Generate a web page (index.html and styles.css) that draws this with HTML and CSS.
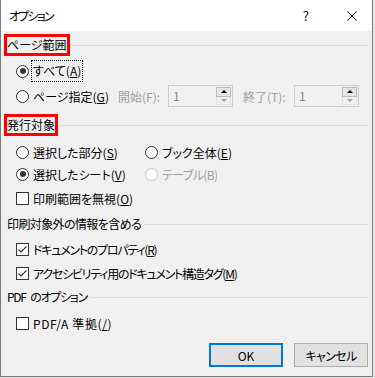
FILE: index.html
```html
<!DOCTYPE html>
<html lang="ja">
<head>
    <meta charset="UTF-8">
    <meta name="viewport" content="width=device-width, initial-scale=1.0">
    <title>オプション</title>
    <link rel="stylesheet" href="styles.css">
</head>
<body>
    <div class="dialog">
        <div class="titlebar">
            <span class="title">オプション</span>
            <span class="help">?</span>
            <svg class="close" width="10" height="10" viewBox="0 0 10 10">
                <path d="M0.5 0.5 L9.5 9.5 M9.5 0.5 L0.5 9.5" stroke="#000" stroke-width="1" fill="none"/>
            </svg>
        </div>

        <div class="content">
            <div class="group-label g1"><span class="marked">ページ範囲</span></div>
            <div class="row r1">
                <span class="radio checked"></span>
                <span class="text focus">すべて(<u>A</u>)</span>
            </div>
            <div class="row r2">
                <span class="radio"></span>
                <span class="text w-pages">ページ指定(<u>G</u>)</span>
                <span class="text dim w-from">開始(F):</span>
                <span class="spin">
                    <span class="spin-value">1</span>
                    <span class="spin-btns"><span class="up"></span><span class="down"></span></span>
                </span>
                <span class="text dim w-to">終了(T):</span>
                <span class="spin">
                    <span class="spin-value">1</span>
                    <span class="spin-btns"><span class="up"></span><span class="down"></span></span>
                </span>
            </div>

            <div class="group-label g2"><span class="marked">発行対象</span></div>
            <div class="row r3">
                <span class="cell">
                    <span class="radio"></span>
                    <span class="text">選択した部分(<u>S</u>)</span>
                </span>
                <span class="radio"></span>
                <span class="text">ブック全体(<u>E</u>)</span>
            </div>
            <div class="row r4">
                <span class="cell">
                    <span class="radio checked"></span>
                    <span class="text">選択したシート(<u>V</u>)</span>
                </span>
                <span class="radio disabled"></span>
                <span class="text dim tight-1">テーブル(B)</span>
            </div>
            <div class="row r5">
                <span class="check"></span>
                <span class="text">印刷範囲を無視(<u>O</u>)</span>
            </div>

            <div class="group-label g3"><span class="tight-1">印刷対象外の情報を含める</span></div>
            <div class="row r6">
                <span class="check checked">
                    <svg width="11" height="11" viewBox="0 0 11 11"><path d="M1.5 5.5 L4 8 L9.5 2.5" stroke="#333" stroke-width="1.1" fill="none"/></svg>
                </span>
                <span class="text tight-2">ドキュメントのプロパティ(<u>R</u>)</span>
            </div>
            <div class="row r7">
                <span class="check checked">
                    <svg width="11" height="11" viewBox="0 0 11 11"><path d="M1.5 5.5 L4 8 L9.5 2.5" stroke="#333" stroke-width="1.1" fill="none"/></svg>
                </span>
                <span class="text tight-2">アクセシビリティ用のドキュメント構造タグ(<u>M</u>)</span>
            </div>

            <div class="group-label g4"><span class="tight-2 spaced">PDF のオプション</span></div>
            <div class="row r8">
                <span class="check"></span>
                <span class="text wide">PDF/A 準拠(<u>/</u>)</span>
            </div>

            <div class="buttons">
                <button class="btn default">OK</button>
                <button class="btn tight-1">キャンセル</button>
            </div>
        </div>
    </div>
</body>
</html>
```

FILE: styles.css
```css
body {
    margin: 0;
    background: #e9e9e9;
    font-family: "Noto Sans CJK JP", "Noto Sans", sans-serif;
    font-size: 12px;
    color: #000;
    font-feature-settings: "palt";
}

.tight-1 { letter-spacing: -0.6px; }
.tight-2 { letter-spacing: -1.25px; }
.wide { letter-spacing: 0.6px; }
.spaced { word-spacing: 3px; }

.dialog {
    width: 371px;
    height: 376px;
    background: #f0f0f0;
    border: 1px solid #7a7a7a;
    border-top: none;
    display: flex;
    flex-direction: column;
}

/* Title bar */
.titlebar {
    height: 31px;
    background: #fff;
    display: flex;
    align-items: center;
    padding-left: 8px;
}

.title {
    flex: 1;
    letter-spacing: -1.8px;
}

.help {
    font-size: 13px;
    margin-right: 38px;
}

.close {
    margin-right: 15px;
}

/* Body */
.content {
    padding: 0 4px 0 5px;
}

.group-label {
    height: 16px;
    line-height: 16px;
    display: flex;
    align-items: center;
    padding-left: 1px;
}

.group-label::after {
    content: "";
    flex: 1;
    height: 1px;
    background: #dcdcdc;
    margin-left: 3px;
}

.marked {
    outline: 3px solid #f00;
}

.g1 { margin-top: 6px; }
.g2 { margin-top: 10px; }
.g3 { margin-top: 7px; }
.g4 { margin-top: 5px; }

.row {
    height: 22px;
    display: flex;
    align-items: center;
    padding-left: 10px;
}

.r1 { margin-top: 7px; }
.r2 { margin-top: 3px; }
.r3 { margin-top: 8px; }
.r5 { margin-top: 2px; }
.r6 { margin-top: 6px; }
.r7 { margin-top: 2px; }
.r8 { margin-top: 7px; }

.cell {
    width: 129px;
    display: flex;
    align-items: center;
}

.text {
    margin-left: 4px;
    white-space: nowrap;
}

.dim {
    color: #a0a0a0;
}

.focus {
    margin-left: 3px;
    padding: 1px 1px 2px;
    outline: 1px dotted #000;
}

/* Radio buttons */
.radio {
    width: 11px;
    height: 11px;
    border: 1px solid #333;
    border-radius: 50%;
    background: #fff;
    position: relative;
    flex: none;
}

.radio.checked::after {
    content: "";
    position: absolute;
    left: 2.5px;
    top: 2.5px;
    width: 6px;
    height: 6px;
    border-radius: 50%;
    background: #333;
}

.radio.disabled {
    border-color: #c5c5c5;
}

/* Check boxes */
.check {
    width: 11px;
    height: 11px;
    border: 1px solid #333;
    background: #fff;
    flex: none;
    display: flex;
    align-items: center;
    justify-content: center;
}

.check svg {
    display: block;
}

/* Page range fields */
.w-pages { width: 81px; }
.w-from { width: 50px; margin-left: 4px; }
.w-to { width: 51px; margin-left: 10px; }

.spin {
    width: 63px;
    height: 20px;
    border: 1px solid #cccccc;
    background: #f0f0f0;
    display: flex;
    flex: none;
}

.spin-value {
    flex: 1;
    padding-left: 4px;
    line-height: 20px;
    color: #7a8aa0;
}

.spin-btns {
    width: 15px;
    margin: 1px 1px 1px 0;
    display: flex;
    flex-direction: column;
}

.spin-btns .up,
.spin-btns .down {
    flex: 1;
    display: flex;
    align-items: center;
    justify-content: center;
}

.spin-btns .up {
    background: #e5e5e5;
    border: 1px solid #bcbcbc;
}

.spin-btns .down {
    background: #f0f0f0;
    border: 1px solid #e3e3e3;
    border-top: none;
}

.spin-btns .up::after {
    content: "";
    border-left: 3px solid transparent;
    border-right: 3px solid transparent;
    border-bottom: 3px solid #000;
}

.spin-btns .down::after {
    content: "";
    border-left: 3px solid transparent;
    border-right: 3px solid transparent;
    border-top: 3px solid #a0a0a0;
}

/* Dialog buttons */
.buttons {
    display: flex;
    justify-content: flex-end;
    gap: 11px;
    margin-top: 9px;
}

.btn {
    width: 74px;
    height: 24px;
    font-family: inherit;
    font-size: 12px;
    font-feature-settings: "palt";
    color: #000;
    background: #e1e1e1;
    border: 1px solid #adadad;
    padding: 0;
}

.btn.default {
    border: 2px solid #0078d7;
}
```
